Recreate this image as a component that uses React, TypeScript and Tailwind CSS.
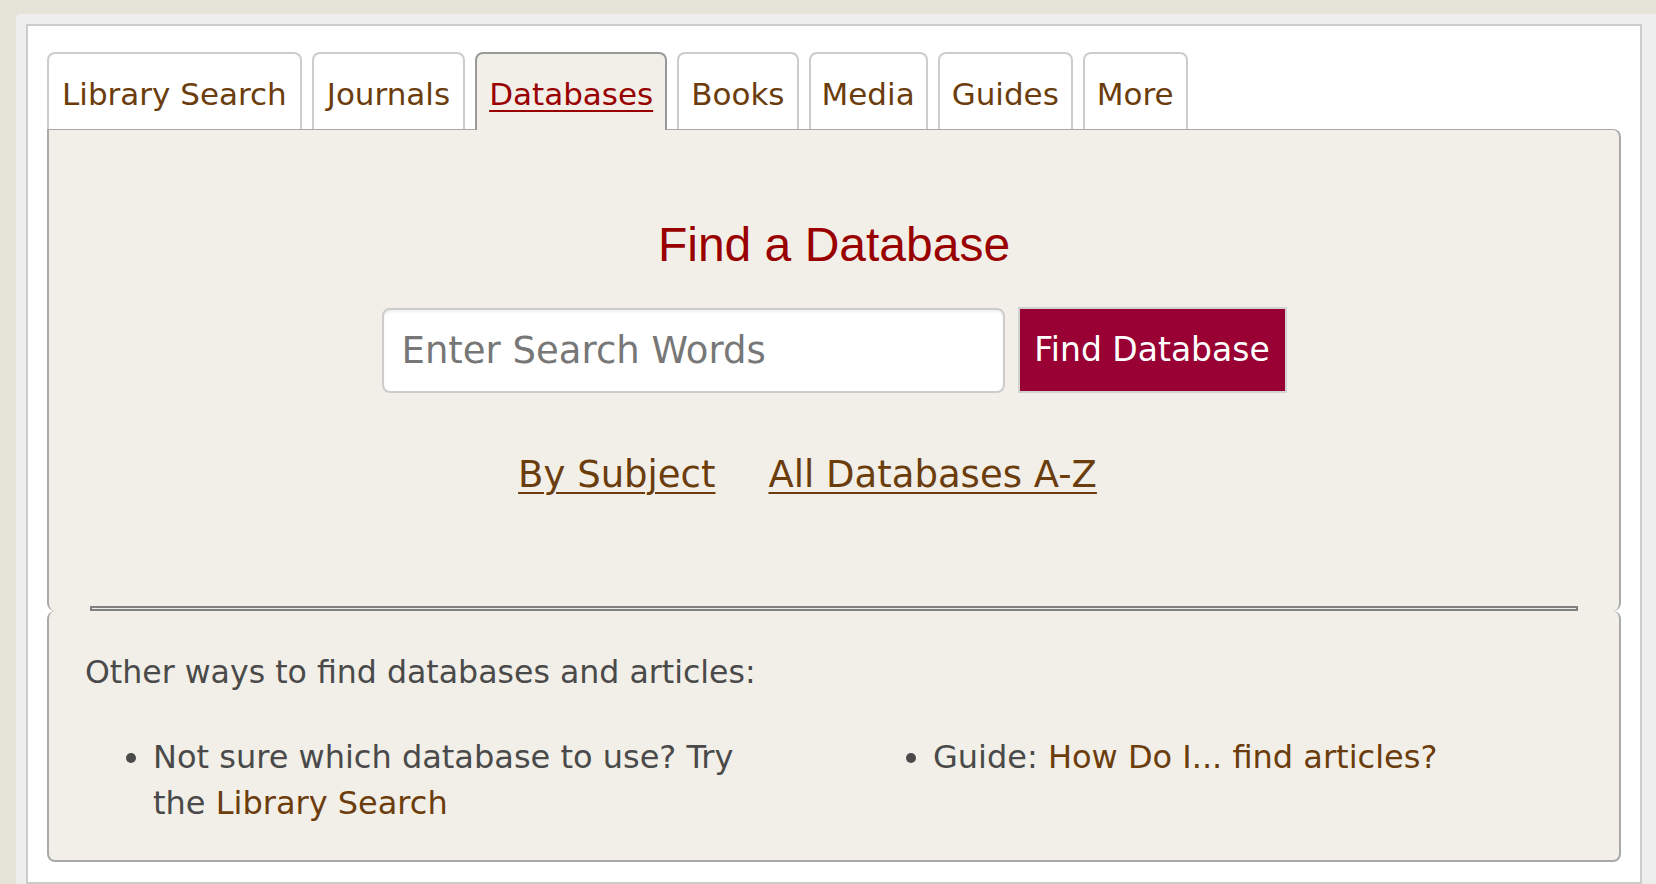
const tabs = [
  { label: "Library Search", pad: "px-[13px]" },
  { label: "Journals", pad: "px-[13px]" },
  { label: "Databases", pad: "px-[12px]", active: true },
  { label: "Books", pad: "px-[12px]" },
  { label: "Media", pad: "px-[11px]" },
  { label: "Guides", pad: "px-[12px]" },
  { label: "More", pad: "px-[12px]" },
];

function Tabs() {
  return (
    <div className="flex items-end gap-[10px]">
      {tabs.map((tab) =>
        tab.active ? (
          <a
            key={tab.label}
            href="#"
            className={`relative z-10 -mb-px rounded-t-[8px] border-2 border-b-0 border-[#9a9a9a] bg-[#f2efe8] ${tab.pad} pt-[22px] pb-[18px] text-[31px] leading-[36px] text-[#990000] underline decoration-2 underline-offset-[5px]`}
          >
            {tab.label}
          </a>
        ) : (
          <a
            key={tab.label}
            href="#"
            className={`rounded-t-[8px] border-2 border-b-0 border-[#cccccc] bg-white ${tab.pad} pt-[22px] pb-[17px] text-[31px] leading-[36px] text-[#6b3d0c]`}
          >
            {tab.label}
          </a>
        )
      )}
    </div>
  );
}

function SearchPanel() {
  return (
    <div className="rounded-tr-[8px] rounded-b-[8px] border-x-2 border-t border-b-0 border-[#a9a9a9] bg-[#f2efe8] pt-[87px]">
      <h2 className="text-center font-['Liberation_Sans',Arial,sans-serif] text-[48px] leading-[56px] text-[#990000]">
        Find a Database
      </h2>
      <form className="mt-[34px] flex items-center justify-center gap-[13px]" onSubmit={(e) => e.preventDefault()}>
        <input
          type="text"
          placeholder="Enter Search Words"
          className="h-[85px] w-[623px] rounded-[8px] border-2 border-[#cccccc] bg-white pl-[18px] text-[37px] text-[#333333] shadow-[inset_0_2px_3px_rgba(0,0,0,0.06)] outline-none placeholder:text-[#777777]"
        />
        <button
          type="submit"
          className="h-[86px] w-[269px] border-2 border-[#d2d2d2] bg-[#990033] text-[33px] text-white"
        >
          Find Database
        </button>
      </form>
      <div className="mt-[60px] flex justify-center text-[37px] leading-[44px]">
        <a href="#" className="mr-[53px] text-[#6b3d0c] underline decoration-2 underline-offset-[5px]">
          By Subject
        </a>
        <a href="#" className="mr-[53px] text-[#6b3d0c] underline decoration-2 underline-offset-[5px]">
          All Databases A-Z
        </a>
      </div>
      <div className="mx-[41px] mt-[109px] h-[5px] border-2 border-[#808080] bg-[#ebebeb]" />
    </div>
  );
}

function OtherWays() {
  return (
    <div className="rounded-[8px] border-x-2 border-b-2 border-t-0 border-[#a9a9a9] bg-[#f2efe8] pt-[38px] pb-[34px] pl-[36px] text-[32px] leading-[46px] text-[#4a4a4a]">
      <p className="text-[31.6px]">Other ways to find databases and articles:</p>
      <div className="mt-[39px] flex">
        <ul className="w-[780px] list-disc pl-[68px] pr-[100px]">
          <li>
            Not sure which database to use? Try the{" "}
            <a href="#" className="text-[#6b3d0c]">
              Library Search
            </a>
          </li>
        </ul>
        <ul className="list-disc pl-[68px]">
          <li>
            Guide:{" "}
            <a href="#" className="text-[#6b3d0c]">
              How Do I... find articles?
            </a>
          </li>
        </ul>
      </div>
    </div>
  );
}

export default function App() {
  return (
    <div className="h-[884px] w-[1656px] overflow-hidden bg-[#e6e4d8] pt-[14px] pl-[16px] font-['DejaVu_Sans',Verdana,sans-serif]">
      <div className="h-full w-[1660px] rounded-tl-[5px] bg-[#eeeeee] pt-[10px] pl-[10px]">
        <div className="h-full w-[1616px] border-2 border-[#cccccc] bg-white px-[19px] pt-[26px]">
          <Tabs />
          <SearchPanel />
          <OtherWays />
        </div>
      </div>
    </div>
  );
}
